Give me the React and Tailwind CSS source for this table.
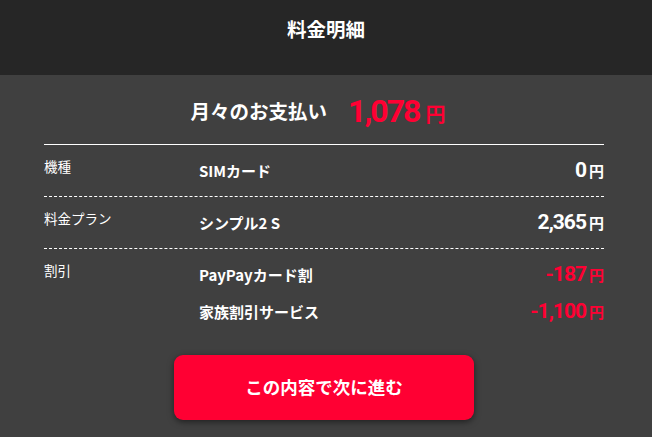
const JP = {
  fontFamily: '"Noto Sans CJK JP", "Noto Sans", sans-serif',
};

const NUM = {
  fontFamily: 'Roboto, "Noto Sans", sans-serif',
};

const rows = [
  {
    label: "機種",
    items: [{ name: "SIMカード", value: "0", red: false }],
  },
  {
    label: "料金プラン",
    items: [{ name: "シンプル2 S", value: "2,365", red: false }],
  },
  {
    label: "割引",
    items: [
      { name: "PayPayカード割", value: "-187", red: true },
      { name: "家族割引サービス", value: "-1,100", red: true },
    ],
  },
];

function Price({ value, red, big }) {
  return (
    <span
      className={`flex items-baseline ${red ? "text-[#ff0033]" : "text-white"}`}
    >
      <span
        className={`font-bold ${
          big ? "text-[32px] tracking-[-2px]" : "text-[21px] tracking-[-1px]"
        }`}
        style={NUM}
      >
        {value}
      </span>
      <span className={`font-bold ${big ? "text-[20px] ml-[6px]" : "text-[15px] ml-[3px]"}`}>
        円
      </span>
    </span>
  );
}

export default function App() {
  return (
    <div className="w-[652px] h-[437px] bg-[#404040] flex flex-col" style={JP}>
      <header className="h-[75px] bg-[#262626] flex justify-center pt-[15px]">
        <h1 className="text-white text-[19.5px] font-bold leading-[28px]">料金明細</h1>
      </header>

      <div className="pl-[44px] pr-[48px]">
        <div className="flex items-center justify-center h-[70px] border-b border-white gap-[21px] pt-[2px] pr-[12px]">
          <span className="text-white text-[19.5px] font-bold">月々のお支払い</span>
          <Price value="1,078" red big />
        </div>

        {rows.map((row, i) => (
          <div
            key={row.label}
            className={`flex pt-[12px] ${
              i < rows.length - 1
                ? "border-b border-dashed border-white h-[52px]"
                : ""
            }`}
          >
            <div className="w-[155px] text-white text-[13.5px] leading-[18px]">
              {row.label}
            </div>
            <div className="flex-1 flex flex-col gap-[9px]">
              {row.items.map((it) => (
                <div key={it.name} className="flex items-center justify-between h-[28px]">
                  <span className="text-white text-[15px] font-bold">{it.name}</span>
                  <Price value={it.value} red={it.red} />
                </div>
              ))}
            </div>
          </div>
        ))}
      </div>

      <div className="flex justify-center mt-[29px] pr-[4px]">
        <button className="w-[300px] h-[65px] rounded-[9px] bg-[#ff0033] text-white text-[17.5px] font-bold shadow-[0_2px_6px_rgba(0,0,0,0.5)]">
          この内容で次に進む
        </button>
      </div>
    </div>
  );
}
